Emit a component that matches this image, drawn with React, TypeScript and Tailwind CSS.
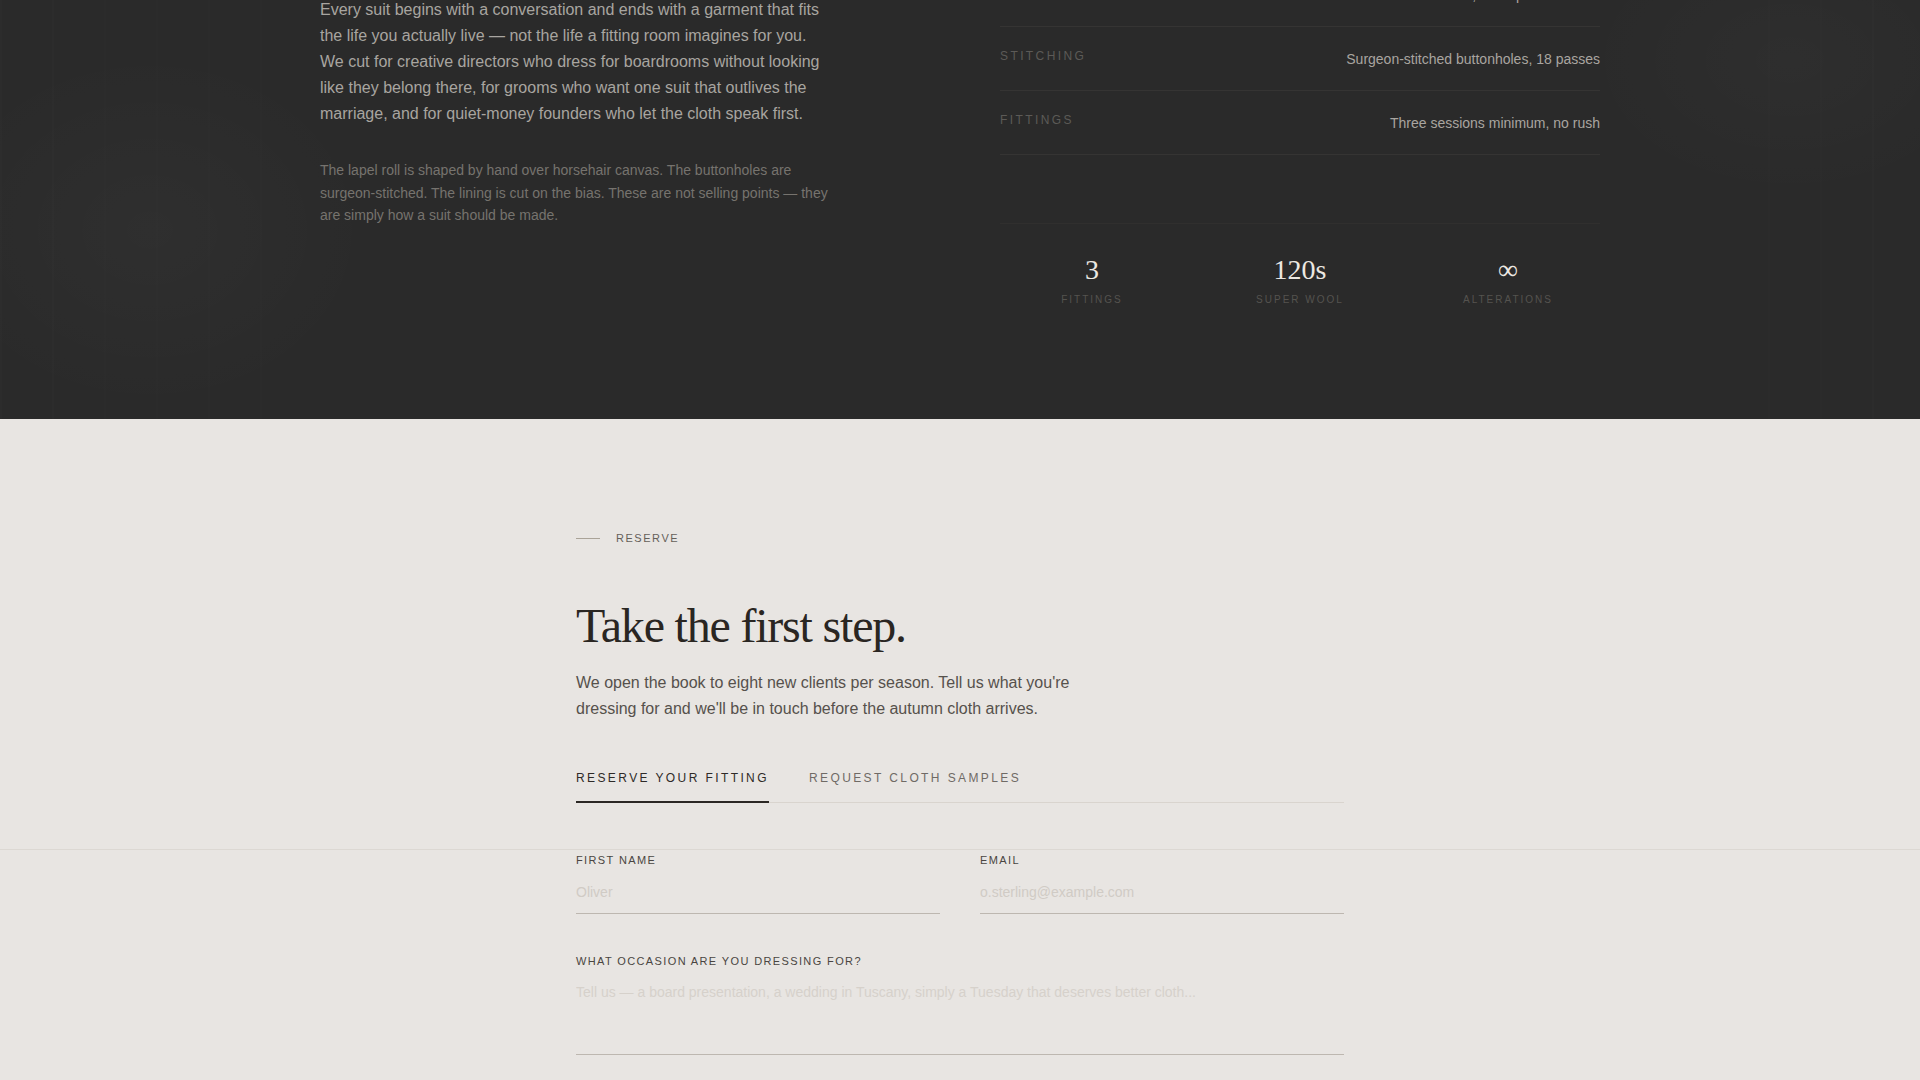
import React from "react";

const sans = "font-['Liberation_Sans',Arial,sans-serif]";
const serif = "font-['Liberation_Serif','Times_New_Roman',serif]";

function SpecRow({ label, value }: { label: string; value: string }) {
  return (
    <div className="flex items-start justify-between border-b border-[#353433] py-[21.5px]">
      <span className="text-[12px] leading-[15px] uppercase tracking-[0.2em] text-[#5c5a57]">{label}</span>
      <span className="text-[14px] leading-5 text-[#a9a5a0]">{value}</span>
    </div>
  );
}

function Stat({ n, label }: { n: string; label: string }) {
  return (
    <div className="flex flex-col items-center">
      <span className={`${serif} text-[28px] leading-8 text-[#ece8e2]`}>{n}</span>
      <span className="mt-[7px] text-[10px] leading-[14px] uppercase tracking-[0.2em] text-[#55534f]">{label}</span>
    </div>
  );
}

export default function App() {
  return (
    <div className={`${sans} min-h-screen w-full bg-[#e8e5e2]`}>
      {/* Dark section */}
      <section className="relative h-[419px] overflow-hidden bg-[#2a2a2a]">
        <div className="pointer-events-none absolute inset-0 bg-[radial-gradient(ellipse_320px_260px_at_150px_230px,rgba(255,255,255,0.025),transparent_70%)]" />
        <div className="pointer-events-none absolute inset-0 bg-[radial-gradient(ellipse_300px_200px_at_1790px_60px,rgba(255,255,255,0.018),transparent_70%)]" />
        <div className="pointer-events-none absolute inset-0 bg-[repeating-linear-gradient(90deg,rgba(255,255,255,0.012)_0px,rgba(255,255,255,0.012)_2px,transparent_2px,transparent_52px)] [mask-image:linear-gradient(90deg,black_0%,transparent_28%,transparent_80%,black_100%)]" />
        <div className="relative mx-auto -mt-[35px] grid w-[1280px] grid-cols-2 gap-20">
          <div className="pt-[32px]">
            <p className="max-w-[512px] text-[16px] leading-[26px] text-[#a8a5a0]">
              Every suit begins with a conversation and ends with a garment that fits the life you actually live — not the life a fitting room imagines for you. We cut for creative directors who dress for boardrooms without looking like they belong there, for grooms who want one suit that outlives the marriage, and for quiet-money founders who let the cloth speak first.
            </p>
            <p className="mt-[32px] max-w-[512px] text-[14px] leading-[22.5px] text-[#76736e]">
              The lapel roll is shaped by hand over horsehair canvas. The buttonholes are surgeon-stitched. The lining is cut on the bias. These are not selling points — they are simply how a suit should be made.
            </p>
          </div>
          <div className="-mt-[2px]">
            <SpecRow label="Canvas" value="Full canvas, hand-padded chest" />
            <SpecRow label="Stitching" value="Surgeon-stitched buttonholes, 18 passes" />
            <SpecRow label="Fittings" value="Three sessions minimum, no rush" />
            <div className="mt-[68px] grid grid-cols-3 gap-6 border-t border-[#302f2e] pt-[30px]">
              <Stat n="3" label="Fittings" />
              <Stat n="120s" label="Super Wool" />
              <Stat n="∞" label="Alterations" />
            </div>
          </div>
        </div>
      </section>

      {/* Light section */}
      <section className="bg-[#e8e5e2] pt-[111px] pb-10">
        <div className="mx-auto w-[768px]">
          <div className="flex items-center gap-4">
            <span className="h-px w-6 bg-[#aaa398]" />
            <span className="text-[11px] leading-4 uppercase tracking-[0.14em] text-[#655f59]">Reserve</span>
          </div>
          <h2 className={`${serif} mt-[53px] text-[48px] leading-[53px] tracking-[-0.025em] text-[#2a2622]`}>
            Take the first step.
          </h2>
          <p className="mt-[18px] max-w-[520px] text-[16px] leading-[26px] text-[#56514c]">
            We open the book to eight new clients per season. Tell us what you're dressing for and we'll be in touch before the autumn cloth arrives.
          </p>
          <div className="mt-[47px] flex gap-10 border-b border-[#d9d4ce]">
            <button className="-mb-px border-b-2 border-[#2b2724] pb-[14px] text-[12px] leading-[18px] uppercase tracking-[0.2em] text-[#2e2a27]">
              Reserve your fitting
            </button>
            <button className="-mb-px border-b-2 border-transparent pb-[14px] text-[12px] leading-[18px] uppercase tracking-[0.2em] text-[#6f6a65]">
              Request cloth samples
            </button>
          </div>
        </div>
        <div className="mt-[46px] border-t border-[#dcd8d3]">
          <div className="mx-auto w-[768px] pt-[2px]">
            <div className="grid grid-cols-2 gap-10">
              <label className="flex flex-col">
                <span className="text-[11px] leading-4 uppercase tracking-[0.125em] text-[#4a4541]">First name</span>
                <input
                  placeholder="Oliver"
                  className="mt-[6px] border-b border-[#bdb7b0] bg-transparent pt-2 pb-[11px] text-[14px] leading-5 text-[#2a2622] outline-none placeholder:text-[#d0cbc5]"
                />
              </label>
              <label className="flex flex-col">
                <span className="text-[11px] leading-4 uppercase tracking-[0.125em] text-[#4a4541]">Email</span>
                <input
                  placeholder="o.sterling@example.com"
                  className="mt-[6px] border-b border-[#bdb7b0] bg-transparent pt-2 pb-[11px] text-[14px] leading-5 text-[#2a2622] outline-none placeholder:text-[#d0cbc5]"
                />
              </label>
            </div>
            <label className="mt-[39px] flex flex-col">
              <span className="text-[11px] leading-4 uppercase tracking-[0.125em] text-[#4a4541]">What occasion are you dressing for?</span>
              <textarea
                rows={3}
                placeholder="Tell us — a board presentation, a wedding in Tuscany, simply a Tuesday that deserves better cloth..."
                className="mt-[6px] resize-none border-b border-[#bdb7b0] bg-transparent pt-[7px] pb-3 text-[14px] leading-5 text-[#2a2622] outline-none placeholder:text-[#d6d1cb]"
              />
            </label>
          </div>
        </div>
      </section>
    </div>
  );
}
